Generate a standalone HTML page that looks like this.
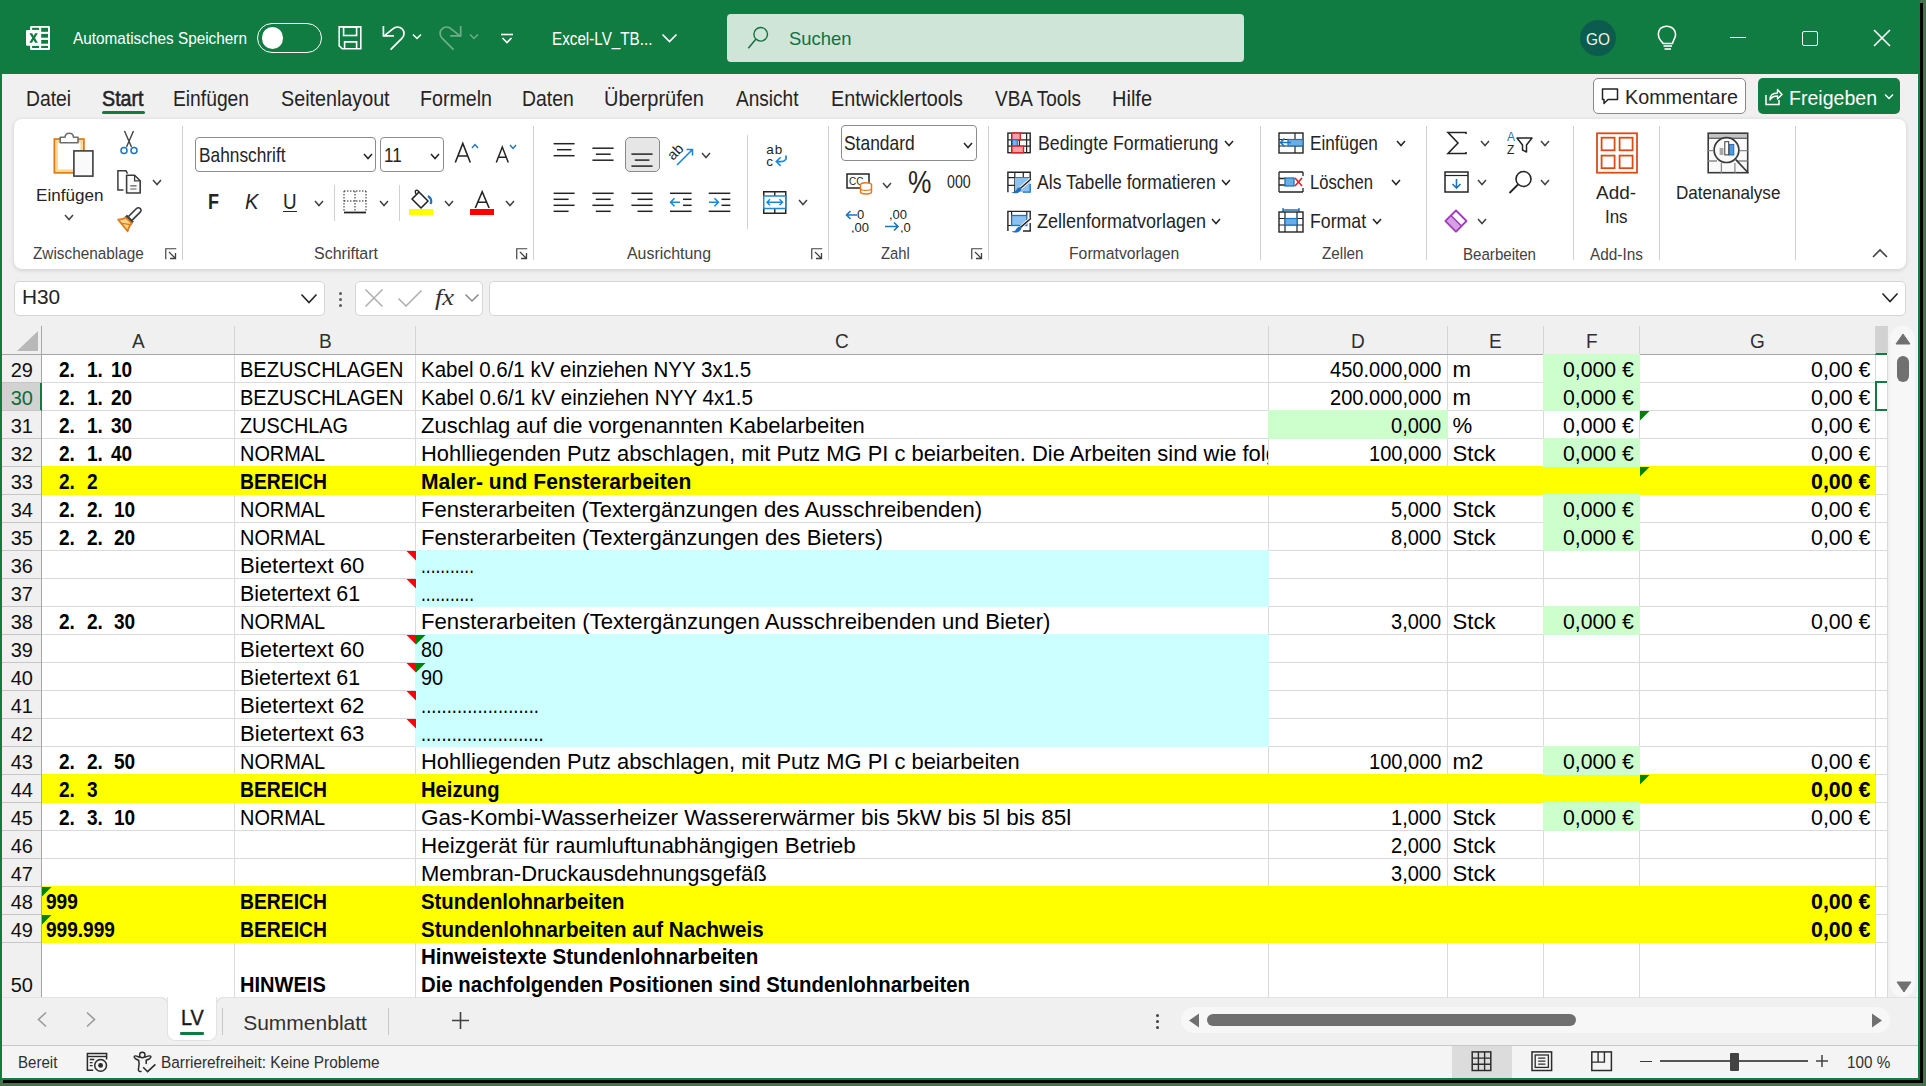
<!DOCTYPE html>
<html><head><meta charset="utf-8"><style>
html,body{margin:0;padding:0;width:1926px;height:1086px;overflow:hidden;position:relative;background:#49714f;}
.a{position:absolute;box-sizing:border-box;}
.t{position:absolute;white-space:pre;font-family:"Liberation Sans",sans-serif;transform-origin:0 0;}

</style></head><body><div class='a' style='left:3px;top:3px;width:1920px;height:1080px;background:#000;'></div><div class='a' style='left:0px;top:0px;width:1920px;height:1080px;background:#107c41;'></div><div class='a' style='left:2px;top:74px;width:1916px;height:1004px;background:#f0f0f0;'></div><div class='a' style='left:2px;top:1077px;width:1916px;height:1px;background:#ffffff;'></div><div class='a' style='left:1917px;top:74px;width:1px;height:1004px;background:#ffffff;'></div><svg class='a' style='left:0px;top:0px;' width='60' height='60' viewBox='0 0 60 60'>
<rect x="30.1" y="26" width="19.9" height="24" rx="1.2" fill="#ffffff"/>
<rect x="26" y="30.1" width="14" height="15.6" rx="1.2" fill="#ffffff"/>
<rect x="32.1" y="27.8" width="7" height="2.1" fill="#107c41"/>
<rect x="32.1" y="45.9" width="7" height="2.1" fill="#107c41"/>
<rect x="41.2" y="27.8" width="6.8" height="4" fill="#107c41"/>
<rect x="41.2" y="33.9" width="6.8" height="3.8" fill="#107c41"/>
<rect x="41.2" y="39.9" width="6.8" height="3.8" fill="#107c41"/>
<rect x="41.2" y="45.9" width="6.8" height="2.1" fill="#107c41"/>
<path d="M29.4 33.3 H32.2 L33.6 36 L35.1 33.3 H37.8 L35 37.9 L37.9 42.7 H35.1 L33.6 39.9 L32 42.7 H29.3 L32.2 37.9 Z" fill="#107c41"/>
</svg><div class='t' style='left:73.00px;top:31.00px;font-size:16.67px;line-height:16.67px;color:#ffffff;font-weight:400;transform:scaleX(0.9212);'>Automatisches Speichern</div><div class='a' style='left:257px;top:23px;width:65px;height:30px;border:1.5px solid #ffffff;border-radius:15px'></div><div class='a' style='left:261.5px;top:27px;width:21.5px;height:21.5px;background:#ffffff;border-radius:50%'></div><svg class='a' style='left:0px;top:0px;' width='560' height='60' viewBox='0 0 560 60'>
<path d="M339.2 26.9 H360.8 V48.8 H342.2 L339.2 45.8 Z" fill="none" stroke="#ffffff" stroke-width="1.6"/>
<rect x="343.6" y="26.9" width="13" height="8.6" fill="none" stroke="#ffffff" stroke-width="1.6"/>
<path d="M344.6 48.8 V41.9 H356.6 V48.8" fill="none" stroke="#ffffff" stroke-width="1.6"/>
<path d="M383.4 26.1 V35.9 H393.9" fill="none" stroke="#ffffff" stroke-width="1.7"/>
<path d="M384.2 35.9 L392.9 28.9 A6.5 6.5 0 1 1 402.1 38.1 L390.6 49.6" fill="none" stroke="#ffffff" stroke-width="1.7"/>
<path d="M460.7 26.1 V35.9 H450.2" fill="none" stroke="#6fae89" stroke-width="1.7"/>
<path d="M459.9 35.9 L451.2 28.9 A6.5 6.5 0 1 0 442 38.1 L453.5 49.6" fill="none" stroke="#6fae89" stroke-width="1.7"/>
</svg><svg class='a' style='left:412px;top:33px;' width='10' height='8' viewBox='0 0 10 8'><path d='M1 1.5 L5 5.5 L9 1.5' fill='none' stroke='#ffffff' stroke-width='1.5'/></svg><svg class='a' style='left:469px;top:33px;' width='10' height='8' viewBox='0 0 10 8'><path d='M1 1.5 L5 5.5 L9 1.5' fill='none' stroke='#6fae89' stroke-width='1.5'/></svg><svg class='a' style='left:500px;top:33px;' width='14' height='12' viewBox='0 0 14 12'><line x1='1' y1='1.5' x2='13' y2='1.5' stroke='#ffffff' stroke-width='1.6'/><path d='M2.5 5 L7 9.5 L11.5 5' fill='none' stroke='#ffffff' stroke-width='1.6'/></svg><div class='t' style='left:552.00px;top:30.00px;font-size:18.12px;line-height:18.12px;color:#ffffff;font-weight:400;transform:scaleX(0.8414);'>Excel-LV_TB...</div><svg class='a' style='left:661px;top:33px;' width='17' height='11' viewBox='0 0 17 11'><path d='M1.5 1.5 L8.5 8.5 L15.5 1.5' fill='none' stroke='#ffffff' stroke-width='1.7'/></svg><div class='a' style='left:727px;top:14px;width:517px;height:48px;background:#cfe5d8;border-radius:4px'></div><svg class='a' style='left:747px;top:26px;' width='24' height='24' viewBox='0 0 24 24'><circle cx='13.7' cy='8.3' r='6.8' fill='none' stroke='#127040' stroke-width='1.4'/><line x1='8.8' y1='13.2' x2='1.3' y2='22.3' stroke='#127040' stroke-width='1.5'/></svg><div class='t' style='left:789.00px;top:30.00px;font-size:18.84px;line-height:18.84px;color:#127040;font-weight:400;transform:scaleX(0.9787);'>Suchen</div><div class='a' style='left:1580px;top:20px;width:36px;height:36px;background:#0b5c4f;border-radius:50%'></div><div class='t' style='left:1586.00px;top:32.00px;font-size:15.94px;line-height:15.94px;color:#f4f0e0;font-weight:400;transform:scaleX(0.9679);'>GO</div><svg class='a' style='left:1656px;top:25px;' width='22' height='26' viewBox='0 0 22 26'>
<path d="M5 16 C1 12 1.5 4 7 2 C12 0 19 2.5 19.5 9 C20 13 17 15 16.5 18.5 H7 C6.8 17.5 6 17 5 16 Z" fill="none" stroke="#ffffff" stroke-width="1.6"/>
<line x1="7.5" y1="21" x2="16" y2="21" stroke="#ffffff" stroke-width="1.6"/>
<line x1="8.5" y1="24" x2="15" y2="24" stroke="#ffffff" stroke-width="1.6"/>
</svg><div class='a' style='left:1730px;top:36.5px;width:16px;height:1.5px;background:#ffffff;'></div><div class='a' style='left:1802px;top:30.5px;width:16px;height:15px;border:1.5px solid #ffffff;border-radius:2px'></div><svg class='a' style='left:1873px;top:29px;' width='18' height='18' viewBox='0 0 18 18'><path d='M1 1 L17 17 M17 1 L1 17' stroke='#ffffff' stroke-width='1.6'/></svg><div class='t' style='left:26.40px;top:88.00px;font-size:21.74px;line-height:21.74px;color:#242424;font-weight:400;transform:scaleX(0.8887);'>Datei</div><div class='t' style='left:102.40px;top:88.00px;font-size:21.74px;line-height:21.74px;color:#242424;font-weight:400;transform:scaleX(0.9062);-webkit-text-stroke:0.55px #242424;'>Start</div><div class='t' style='left:173.00px;top:88.00px;font-size:21.74px;line-height:21.74px;color:#242424;font-weight:400;transform:scaleX(0.8857);'>Einfügen</div><div class='t' style='left:281.00px;top:88.00px;font-size:21.74px;line-height:21.74px;color:#242424;font-weight:400;transform:scaleX(0.9078);'>Seitenlayout</div><div class='t' style='left:420.00px;top:88.00px;font-size:21.74px;line-height:21.74px;color:#242424;font-weight:400;transform:scaleX(0.9032);'>Formeln</div><div class='t' style='left:522.00px;top:88.00px;font-size:21.74px;line-height:21.74px;color:#242424;font-weight:400;transform:scaleX(0.8914);'>Daten</div><div class='t' style='left:604.00px;top:88.00px;font-size:21.74px;line-height:21.74px;color:#242424;font-weight:400;transform:scaleX(0.9195);'>Überprüfen</div><div class='t' style='left:735.50px;top:88.00px;font-size:21.74px;line-height:21.74px;color:#242424;font-weight:400;transform:scaleX(0.8768);'>Ansicht</div><div class='t' style='left:831.00px;top:88.00px;font-size:21.74px;line-height:21.74px;color:#242424;font-weight:400;transform:scaleX(0.9106);'>Entwicklertools</div><div class='t' style='left:995.00px;top:88.00px;font-size:21.74px;line-height:21.74px;color:#242424;font-weight:400;transform:scaleX(0.8714);'>VBA Tools</div><div class='t' style='left:1112.00px;top:88.00px;font-size:21.74px;line-height:21.74px;color:#242424;font-weight:400;transform:scaleX(0.9199);'>Hilfe</div><div class='a' style='left:102px;top:111px;width:43px;height:3px;background:#107c41;border-radius:1.5px;'></div><div class='a' style='left:1593px;top:78px;width:153px;height:36px;background:#fff;border:1px solid #8a8a8a;border-radius:5px'></div><svg class='a' style='left:1601px;top:88px;' width='18' height='17' viewBox='0 0 18 17'><path d='M1.5 1 H16.5 V11.5 H7 L3 15.5 V11.5 H1.5 Z' fill='none' stroke='#242424' stroke-width='1.5' stroke-linejoin='round'/></svg><div class='t' style='left:1625.00px;top:87.00px;font-size:20.29px;line-height:20.29px;color:#242424;font-weight:400;transform:scaleX(0.9732);'>Kommentare</div><div class='a' style='left:1758px;top:78px;width:142px;height:36px;background:#107c41;border-radius:5px'></div><svg class='a' style='left:1765px;top:87px;' width='18' height='19' viewBox='0 0 18 19'><path d='M1 8 V17.5 H14 V13' fill='none' stroke='#fff' stroke-width='1.5'/><path d='M5 13 C5 8 8 6 12.5 6 V2.5 L17 7.5 L12.5 12 V9 C9 9 6.5 10 5 13 Z' fill='none' stroke='#fff' stroke-width='1.4' stroke-linejoin='round'/></svg><div class='t' style='left:1789.00px;top:88.00px;font-size:20.29px;line-height:20.29px;color:#fff;font-weight:400;transform:scaleX(0.9636);'>Freigeben</div><svg class='a' style='left:1884px;top:93px;' width='10' height='7' viewBox='0 0 10 7'><path d='M1 1.5 L5 5.5 L9 1.5' fill='none' stroke='#fff' stroke-width='1.5'/></svg><div class='a' style='left:14px;top:119px;width:1892px;height:150px;background:#fff;border-radius:8px;box-shadow:0 1px 4px rgba(0,0,0,0.16)'></div><div class='a' style='left:182px;top:126px;width:1px;height:134px;background:#d0d0d0;'></div><div class='a' style='left:533px;top:126px;width:1px;height:134px;background:#d0d0d0;'></div><div class='a' style='left:828px;top:126px;width:1px;height:134px;background:#d0d0d0;'></div><div class='a' style='left:988px;top:126px;width:1px;height:134px;background:#d0d0d0;'></div><div class='a' style='left:1260px;top:126px;width:1px;height:134px;background:#d0d0d0;'></div><div class='a' style='left:1426px;top:126px;width:1px;height:134px;background:#d0d0d0;'></div><div class='a' style='left:1573px;top:126px;width:1px;height:134px;background:#d0d0d0;'></div><div class='a' style='left:1659px;top:126px;width:1px;height:134px;background:#d0d0d0;'></div><div class='a' style='left:1795px;top:126px;width:1px;height:134px;background:#d0d0d0;'></div><div class='t' style='left:33.00px;top:246.00px;font-size:16.67px;line-height:16.67px;color:#424242;font-weight:400;transform:scaleX(0.9205);'>Zwischenablage</div><div class='t' style='left:314.00px;top:246.00px;font-size:16.67px;line-height:16.67px;color:#424242;font-weight:400;transform:scaleX(0.9602);'>Schriftart</div><div class='t' style='left:627.00px;top:246.00px;font-size:16.67px;line-height:16.67px;color:#424242;font-weight:400;transform:scaleX(0.9549);'>Ausrichtung</div><div class='t' style='left:881.40px;top:246.00px;font-size:16.67px;line-height:16.67px;color:#424242;font-weight:400;transform:scaleX(0.8887);'>Zahl</div><div class='t' style='left:1069.30px;top:246.00px;font-size:16.67px;line-height:16.67px;color:#424242;font-weight:400;transform:scaleX(0.9455);'>Formatvorlagen</div><div class='t' style='left:1321.90px;top:246.00px;font-size:16.67px;line-height:16.67px;color:#424242;font-weight:400;transform:scaleX(0.9146);'>Zellen</div><div class='t' style='left:1463.40px;top:247.00px;font-size:16.67px;line-height:16.67px;color:#424242;font-weight:400;transform:scaleX(0.9060);'>Bearbeiten</div><div class='t' style='left:1589.50px;top:247.00px;font-size:16.67px;line-height:16.67px;color:#424242;font-weight:400;transform:scaleX(0.9232);'>Add-Ins</div><svg class='a' style='left:165px;top:248px;' width='12' height='12' viewBox='0 0 12 12'><path d='M0.75 11.25 V0.75 H11.25' fill='none' stroke='#424242' stroke-width='1.2'/><path d='M4 4 L10.5 10.5 M5 10.5 H10.5 V5' fill='none' stroke='#424242' stroke-width='1.3'/></svg><svg class='a' style='left:516px;top:248px;' width='12' height='12' viewBox='0 0 12 12'><path d='M0.75 11.25 V0.75 H11.25' fill='none' stroke='#424242' stroke-width='1.2'/><path d='M4 4 L10.5 10.5 M5 10.5 H10.5 V5' fill='none' stroke='#424242' stroke-width='1.3'/></svg><svg class='a' style='left:811px;top:248px;' width='12' height='12' viewBox='0 0 12 12'><path d='M0.75 11.25 V0.75 H11.25' fill='none' stroke='#424242' stroke-width='1.2'/><path d='M4 4 L10.5 10.5 M5 10.5 H10.5 V5' fill='none' stroke='#424242' stroke-width='1.3'/></svg><svg class='a' style='left:971px;top:248px;' width='12' height='12' viewBox='0 0 12 12'><path d='M0.75 11.25 V0.75 H11.25' fill='none' stroke='#424242' stroke-width='1.2'/><path d='M4 4 L10.5 10.5 M5 10.5 H10.5 V5' fill='none' stroke='#424242' stroke-width='1.3'/></svg><svg class='a' style='left:1872px;top:248px;' width='16' height='10' viewBox='0 0 16 10'><path d='M1 9 L8 2 L15 9' fill='none' stroke='#424242' stroke-width='1.6'/></svg><svg class='a' style='left:0px;top:0px;' width='200' height='240' viewBox='0 0 200 240'>
<rect x="54.5" y="139.2" width="29.3" height="33.5" fill="#fff" stroke="#e07b1a" stroke-width="2"/>
<rect x="56.8" y="141.5" width="24.7" height="29" fill="none" stroke="#fcd58c" stroke-width="2"/>
<path d="M60.2 142.7 V137.3 H65 C65.3 131.8 73.2 131.8 73.5 137.3 H78 V142.7 Z" fill="#fff" stroke="#6e6e6e" stroke-width="1.6" stroke-linejoin="round"/>
<rect x="73.9" y="150.9" width="19" height="25.2" fill="#fafafa" stroke="#3c3c3c" stroke-width="1.6"/>
</svg><div class='t' style='left:35.60px;top:187.00px;font-size:17.39px;line-height:17.39px;color:#242424;font-weight:400;transform:scaleX(0.9826);'>Einfügen</div><svg class='a' style='left:64px;top:214px;' width='10' height='7' viewBox='0 0 10 7'><path d='M1 1 L5.0 5.5 L9 1' fill='none' stroke='#424242' stroke-width='1.5'/></svg><svg class='a' style='left:119px;top:130px;' width='20' height='26' viewBox='0 0 20 26'>
<path d="M5.5 1 L12.5 17 M14.5 1 L7.5 17" stroke="#424242" stroke-width="1.4"/>
<circle cx="5" cy="20.5" r="3" fill="none" stroke="#1e73be" stroke-width="1.5"/>
<circle cx="15" cy="20.5" r="3" fill="none" stroke="#1e73be" stroke-width="1.5"/>
</svg><svg class='a' style='left:0px;top:0px;' width='200' height='240' viewBox='0 0 200 240'>
<path d="M127.5 173.6 L126 170.8 H117.9 V190 H123.5" fill="none" stroke="#3c3c3c" stroke-width="1.5"/>
<path d="M126.6 175.2 H134.6 L140.2 180.8 V193 H126.6 Z" fill="#fafafa" stroke="#3c3c3c" stroke-width="1.6" stroke-linejoin="round"/>
<path d="M134.6 175.2 V180.8 H140.2" fill="none" stroke="#3c3c3c" stroke-width="1.3"/>
<path d="M130.3 185.8 H136.5 M130.3 189 H136.5" stroke="#5a5a5a" stroke-width="1.2"/>
</svg><svg class='a' style='left:152px;top:179px;' width='10' height='7' viewBox='0 0 10 7'><path d='M1 1 L5.0 5.5 L9 1' fill='none' stroke='#424242' stroke-width='1.5'/></svg><svg class='a' style='left:0px;top:0px;' width='200' height='240' viewBox='0 0 200 240'>
<path d="M128.5 216.5 L136.5 208.5 C137.5 207.5 139.2 207.5 140.2 208.5 C141.2 209.5 141.2 211.2 140.2 212.2 L132.2 220.2" fill="#fff" stroke="#3c3c3c" stroke-width="1.7" stroke-linejoin="round"/>
<path d="M127 215.5 L133 221.5 L131.5 223 L125.5 217 Z" fill="#3c3c3c" stroke="#3c3c3c" stroke-width="1.2"/>
<path d="M125.8 217.6 C122.5 220 120.5 219.2 118.2 219.6 L127.6 231.2 C128.5 228.5 128.5 226 131.8 223.3 Z" fill="#fcd58c" stroke="#e07b1a" stroke-width="1.8" stroke-linejoin="round"/>
<path d="M121 223.5 C124 223 126.5 224.5 130 224.5" fill="none" stroke="#e07b1a" stroke-width="1.4"/>
</svg><div class='a' style='left:195px;top:137px;width:181px;height:35px;border:1px solid #8c8c8c;border-radius:4px;background:#fff'></div><div class='t' style='left:198.50px;top:145.00px;font-size:20.29px;line-height:20.29px;color:#242424;font-weight:400;transform:scaleX(0.8525);'>Bahnschrift</div><svg class='a' style='left:363px;top:153px;' width='10' height='7' viewBox='0 0 10 7'><path d='M1 1 L5.0 5.5 L9 1' fill='none' stroke='#242424' stroke-width='1.5'/></svg><div class='a' style='left:380px;top:137px;width:64px;height:35px;border:1px solid #8c8c8c;border-radius:4px;background:#fff'></div><div class='t' style='left:384.00px;top:145.00px;font-size:20.29px;line-height:20.29px;color:#242424;font-weight:400;transform:scaleX(0.8404);'>11</div><svg class='a' style='left:430px;top:153px;' width='10' height='7' viewBox='0 0 10 7'><path d='M1 1 L5.0 5.5 L9 1' fill='none' stroke='#242424' stroke-width='1.5'/></svg><svg class='a' style='left:0px;top:0px;' width='560' height='240' viewBox='0 0 560 240'>
<path d='M455.3 162.5 L462.8 143.5 L470.3 162.5 M457.9 156 H467.7' fill='none' stroke='#242424' stroke-width='1.6'/>
<path d='M496.3 162.5 L502.3 147 L508.3 162.5 M498.4 157.2 H506.2' fill='none' stroke='#242424' stroke-width='1.5'/>
<path d='M475.3 208 L482.2 191.8 L489.1 208 M477.6 202.3 H486.8' fill='none' stroke='#242424' stroke-width='1.6'/>
</svg><svg class='a' style='left:471px;top:143px;' width='8' height='6' viewBox='0 0 8 6'><path d='M1 5 L4 1.5 L7 5' fill='none' stroke='#1e73be' stroke-width='1.4'/></svg><svg class='a' style='left:509px;top:144px;' width='8' height='6' viewBox='0 0 8 6'><path d='M1 1 L4 4.5 L7 1' fill='none' stroke='#1e73be' stroke-width='1.4'/></svg><div class='t' style='left:207.50px;top:192.00px;font-size:21.45px;line-height:21.45px;color:#242424;font-weight:700;transform:scaleX(0.8391);'>F</div><div class='t' style='left:244.70px;top:192.00px;font-size:21.45px;line-height:21.45px;color:#242424;font-weight:400;transform:scaleX(0.9432);font-style:italic;'>K</div><div class='t' style='left:283.00px;top:192.00px;font-size:21.45px;line-height:21.45px;color:#242424;font-weight:400;transform:scaleX(0.8783);'>U</div><div class='a' style='left:283px;top:210.5px;width:14px;height:1.5px;background:#242424;'></div><svg class='a' style='left:314px;top:200px;' width='10' height='7' viewBox='0 0 10 7'><path d='M1 1 L5.0 5.5 L9 1' fill='none' stroke='#424242' stroke-width='1.5'/></svg><div class='a' style='left:334px;top:185px;width:1px;height:36px;background:#d0d0d0;'></div><svg class='a' style='left:343px;top:190px;' width='24' height='24' viewBox='0 0 24 24'>
<path d='M1 1 H23 M1 1 V21 M23 1 V21 M12 1 V21 M1 11 H23' fill='none' stroke='#242424' stroke-width='1' stroke-dasharray='1.5 1.5'/>
<line x1='1' y1='22.5' x2='23' y2='22.5' stroke='#242424' stroke-width='1.8'/>
</svg><svg class='a' style='left:379px;top:200px;' width='10' height='7' viewBox='0 0 10 7'><path d='M1 1 L5.0 5.5 L9 1' fill='none' stroke='#424242' stroke-width='1.5'/></svg><div class='a' style='left:399px;top:185px;width:1px;height:36px;background:#d0d0d0;'></div><svg class='a' style='left:409px;top:189px;' width='26' height='21' viewBox='0 0 26 21'>
<path d='M10 3 L19 12 L12 19 L3 10 Z' fill='none' stroke='#242424' stroke-width='1.6' stroke-linejoin='round'/>
<path d='M10 3 C8 0 5 1 7 5' fill='none' stroke='#242424' stroke-width='1.4'/>
<path d='M19 7 C22 9 23 12 21.5 15' fill='none' stroke='#1e73be' stroke-width='2.2'/>
</svg><div class='a' style='left:409px;top:209px;width:24px;height:6px;background:#ffff00;'></div><svg class='a' style='left:444px;top:200px;' width='10' height='7' viewBox='0 0 10 7'><path d='M1 1 L5.0 5.5 L9 1' fill='none' stroke='#424242' stroke-width='1.5'/></svg><div class='a' style='left:470px;top:209px;width:24px;height:6px;background:#ff0000;'></div><svg class='a' style='left:505px;top:200px;' width='10' height='7' viewBox='0 0 10 7'><path d='M1 1 L5.0 5.5 L9 1' fill='none' stroke='#424242' stroke-width='1.5'/></svg><div class='a' style='left:624.5px;top:137.3px;width:35px;height:35.2px;background:#e6e6e6;border:1px solid #8a8a8a;border-radius:5px'></div><svg class='a' style='left:0px;top:0px;' width='1926' height='300' viewBox='0 0 1926 300'><line x1='553.6' y1='143.7' x2='574.6' y2='143.7' stroke='#242424' stroke-width='1.5'/><line x1='557' y1='149.7' x2='571.5' y2='149.7' stroke='#242424' stroke-width='1.5'/><line x1='553.6' y1='155.7' x2='574.6' y2='155.7' stroke='#242424' stroke-width='1.5'/><line x1='592.4' y1='148.2' x2='613.6' y2='148.2' stroke='#242424' stroke-width='1.5'/><line x1='595.8' y1='154.2' x2='610.7' y2='154.2' stroke='#242424' stroke-width='1.5'/><line x1='592.4' y1='160.2' x2='613.6' y2='160.2' stroke='#242424' stroke-width='1.5'/><line x1='631.4' y1='154.1' x2='652.6' y2='154.1' stroke='#242424' stroke-width='1.5'/><line x1='634.8' y1='160.1' x2='649.4' y2='160.1' stroke='#242424' stroke-width='1.5'/><line x1='631.4' y1='166.1' x2='652.6' y2='166.1' stroke='#242424' stroke-width='1.5'/><line x1='553.6' y1='193.3' x2='574.6' y2='193.3' stroke='#242424' stroke-width='1.5'/><line x1='592.4' y1='193.3' x2='613.6' y2='193.3' stroke='#242424' stroke-width='1.5'/><line x1='631.4' y1='193.3' x2='652.6' y2='193.3' stroke='#242424' stroke-width='1.5'/><line x1='670' y1='193.3' x2='691.6' y2='193.3' stroke='#242424' stroke-width='1.5'/><line x1='708.7' y1='193.3' x2='730.3' y2='193.3' stroke='#242424' stroke-width='1.5'/><line x1='553.6' y1='199.3' x2='568.6' y2='199.3' stroke='#242424' stroke-width='1.5'/><line x1='595.8' y1='199.3' x2='610.7' y2='199.3' stroke='#242424' stroke-width='1.5'/><line x1='637.5' y1='199.3' x2='652.6' y2='199.3' stroke='#242424' stroke-width='1.5'/><line x1='683' y1='199.3' x2='691.6' y2='199.3' stroke='#242424' stroke-width='1.5'/><line x1='721.5' y1='199.3' x2='730.3' y2='199.3' stroke='#242424' stroke-width='1.5'/><line x1='553.6' y1='205.3' x2='574.6' y2='205.3' stroke='#242424' stroke-width='1.5'/><line x1='592.4' y1='205.3' x2='613.6' y2='205.3' stroke='#242424' stroke-width='1.5'/><line x1='631.4' y1='205.3' x2='652.6' y2='205.3' stroke='#242424' stroke-width='1.5'/><line x1='683' y1='205.3' x2='691.6' y2='205.3' stroke='#242424' stroke-width='1.5'/><line x1='721.5' y1='205.3' x2='730.3' y2='205.3' stroke='#242424' stroke-width='1.5'/><line x1='553.6' y1='211.3' x2='568.6' y2='211.3' stroke='#242424' stroke-width='1.5'/><line x1='595.8' y1='211.3' x2='610.7' y2='211.3' stroke='#242424' stroke-width='1.5'/><line x1='637.5' y1='211.3' x2='652.6' y2='211.3' stroke='#242424' stroke-width='1.5'/><line x1='670' y1='211.3' x2='691.6' y2='211.3' stroke='#242424' stroke-width='1.5'/><line x1='708.7' y1='211.3' x2='730.3' y2='211.3' stroke='#242424' stroke-width='1.5'/><path d='M674.5 198.3 L670.6 202.3 L674.5 206.3 M670.6 202.3 H680' fill='none' stroke='#1e88d6' stroke-width='1.6'/><path d='M714.5 198.3 L718.4 202.3 L714.5 206.3 M709 202.3 H718.4' fill='none' stroke='#1e88d6' stroke-width='1.6'/></svg><svg class='a' style='left:668px;top:141px;' width='28' height='27' viewBox='0 0 28 27'>
<text x='0' y='0' font-family='Liberation Sans' font-size='14.5' fill='#242424' transform='translate(5 20) rotate(-45)'>ab</text>
<path d='M9 24 L24.5 8.5 M18.5 8.5 H24.5 V14.5' fill='none' stroke='#1e88d6' stroke-width='1.6'/>
</svg><svg class='a' style='left:701px;top:152px;' width='10' height='7' viewBox='0 0 10 7'><path d='M1 1 L5.0 5.5 L9 1' fill='none' stroke='#424242' stroke-width='1.5'/></svg><div class='a' style='left:747px;top:135px;width:1px;height:94px;background:#d0d0d0;'></div><svg class='a' style='left:764px;top:141px;' width='26' height='28' viewBox='0 0 26 28'>
<text x='2.3' y='13.3' font-family='Liberation Sans' font-size='13.5' fill='#242424' letter-spacing='1'>ab</text>
<text x='2.3' y='24.5' font-family='Liberation Sans' font-size='13.5' fill='#242424'>c</text>
<path d='M21.5 14.5 C23.5 17.5 21 20.6 17 20.6 H12.3 M16.6 16.3 L12.3 20.6 L16.6 24.9' fill='none' stroke='#1e88d6' stroke-width='1.6'/>
</svg><svg class='a' style='left:763px;top:191px;' width='24' height='23' viewBox='0 0 24 23'>
<rect x='0.75' y='0.75' width='22' height='21.5' fill='none' stroke='#242424' stroke-width='1.5'/>
<line x1='11.75' y1='0.75' x2='11.75' y2='22' stroke='#242424' stroke-width='1.4'/>
<rect x='0.75' y='5' width='22' height='12.5' fill='#fff' stroke='#1e88d6' stroke-width='1.5'/>
<path d='M4 11.25 H19.5 M7 8.25 L4 11.25 L7 14.25 M16.5 8.25 L19.5 11.25 L16.5 14.25' fill='none' stroke='#1e88d6' stroke-width='1.5'/>
</svg><svg class='a' style='left:798px;top:199px;' width='10' height='7' viewBox='0 0 10 7'><path d='M1 1 L5.0 5.5 L9 1' fill='none' stroke='#424242' stroke-width='1.5'/></svg><div class='a' style='left:841px;top:125px;width:136px;height:36px;border:1px solid #8c8c8c;border-radius:4px;background:#fff'></div><div class='t' style='left:844.30px;top:133.00px;font-size:20.29px;line-height:20.29px;color:#242424;font-weight:400;transform:scaleX(0.8588);'>Standard</div><svg class='a' style='left:963px;top:142px;' width='10' height='7' viewBox='0 0 10 7'><path d='M1 1 L5.0 5.5 L9 1' fill='none' stroke='#242424' stroke-width='1.5'/></svg><svg class='a' style='left:846px;top:173px;' width='27' height='22' viewBox='0 0 27 22'>
<rect x='1' y='1' width='22' height='14' fill='none' stroke='#242424' stroke-width='1.5'/>
<text x='3' y='12' font-family='Liberation Sans' font-size='10' fill='#242424'>CC</text>
<ellipse cx='20' cy='12' rx='5.5' ry='2.3' fill='#fff' stroke='#e8791f' stroke-width='1.5'/>
<path d='M14.5 12 V19 C14.5 21.5 25.5 21.5 25.5 19 V12' fill='#fff' stroke='#e8791f' stroke-width='1.5'/>
<path d='M14.5 15.5 C14.5 18 25.5 18 25.5 15.5' fill='none' stroke='#e8791f' stroke-width='1.3'/>
</svg><svg class='a' style='left:882px;top:182px;' width='10' height='7' viewBox='0 0 10 7'><path d='M1 1 L5.0 5.5 L9 1' fill='none' stroke='#424242' stroke-width='1.5'/></svg><div class='t' style='left:908.00px;top:167.00px;font-size:31.16px;line-height:31.16px;color:#242424;font-weight:400;transform:scaleX(0.8447);'>%</div><div class='t' style='left:946.80px;top:174.00px;font-size:17.68px;line-height:17.68px;color:#242424;font-weight:400;transform:scaleX(0.8034);'>000</div><svg class='a' style='left:845px;top:208px;' width='27' height='25' viewBox='0 0 27 25'>
<text x='12' y='11' font-family='Liberation Sans' font-size='13' fill='#242424'>0</text>
<text x='6' y='23.5' font-family='Liberation Sans' font-size='13' fill='#242424'>,00</text>
<path d='M12 7 H1.5 M5.5 3 L1.5 7 L5.5 11' fill='none' stroke='#1e73be' stroke-width='1.6'/>
</svg><svg class='a' style='left:884px;top:208px;' width='27' height='25' viewBox='0 0 27 25'>
<text x='5' y='11' font-family='Liberation Sans' font-size='13' fill='#242424'>,00</text>
<text x='16' y='23.5' font-family='Liberation Sans' font-size='13' fill='#242424'>,0</text>
<path d='M1 18.5 H14 M10 14.5 L14 18.5 L10 22.5' fill='none' stroke='#1e73be' stroke-width='1.6'/>
</svg><svg class='a' style='left:1000px;top:125px;' width='40' height='115' viewBox='1000 125 40 115'>
<rect x="1007.9" y="133.1" width="22.3" height="19.6" fill="#fafafa" stroke="#242424" stroke-width="1.4"/>
<path d="M1007.9 139.8 H1030.2 M1007.9 146.1 H1030.2 M1011.6 133.1 V152.7 M1019.4 133.1 V152.7 M1026.6 133.1 V152.7" stroke="#242424" stroke-width="1.2"/>
<rect x="1011.9" y="133.1" width="8.4" height="6.7" fill="#f4a0a8" stroke="#e02020" stroke-width="1.3"/>
<rect x="1012.3" y="139.8" width="5" height="6.3" fill="#78b4ec" stroke="#1e6fc0" stroke-width="1.1"/>
<rect x="1011.9" y="146.1" width="11.6" height="6.6" fill="#f4a0a8" stroke="#e02020" stroke-width="1.3"/>
<path d="M1007.9 192.2 V172.3 H1030.2 V180" fill="none" stroke="#242424" stroke-width="1.4"/>
<path d="M1007.9 177.6 H1030.2 M1007.9 185.3 H1015 M1014.8 172.3 V192 M1023.3 172.3 V177.6" stroke="#242424" stroke-width="1.2"/>
<path d="M1014.8 177.6 H1030.2 V192.2 H1022 L1015 190 Z" fill="#8ec2ee"/>
<path d="M1030.2 184 V192.2 H1023" fill="none" stroke="#1e6fc0" stroke-width="1.3"/>
<path d="M1030.5 179.5 L1019.6 189" stroke="#fafafa" stroke-width="3.2"/>
<path d="M1030.5 179.5 L1020.5 188.2" stroke="#242424" stroke-width="1.5" stroke-linecap="round"/>
<path d="M1020.6 187.3 C1017.5 187 1016.8 189.5 1015.5 191 C1014.5 192 1012.8 192.3 1011.5 192 C1013.5 194 1019.5 194 1021.4 189.5 Z" fill="#1e6fc0"/>
<path d="M1007.9 231 V211.4 H1030.2 V219" fill="none" stroke="#242424" stroke-width="1.4"/>
<path d="M1011.6 211.4 V215.5 M1026.8 211.4 V215.5 M1007.9 225.5 H1011.6" stroke="#242424" stroke-width="1.2"/>
<rect x="1011.6" y="215.5" width="15.2" height="10" fill="#8ec2ee" stroke="#1e6fc0" stroke-width="1.3"/>
<path d="M1030.2 223 V231 H1023" fill="none" stroke="#242424" stroke-width="1.4"/>
<path d="M1030.5 218.7 L1019.6 228.2" stroke="#fafafa" stroke-width="3.2"/>
<path d="M1030.5 218.7 L1020.5 227.4" stroke="#242424" stroke-width="1.5" stroke-linecap="round"/>
<path d="M1020.6 226.5 C1017.5 226.2 1016.8 228.7 1015.5 230.2 C1014.5 231.2 1012.8 231.5 1011.5 231.2 C1013.5 233.2 1019.5 233.2 1021.4 228.7 Z" fill="#1e6fc0"/>
</svg><div class='t' style='left:1037.60px;top:134.00px;font-size:19.42px;line-height:19.42px;color:#242424;font-weight:400;transform:scaleX(0.9138);'>Bedingte Formatierung</div><svg class='a' style='left:1224px;top:140px;' width='10' height='7' viewBox='0 0 10 7'><path d='M1 1 L5.0 5.5 L9 1' fill='none' stroke='#242424' stroke-width='1.5'/></svg><div class='t' style='left:1037.00px;top:173.00px;font-size:19.42px;line-height:19.42px;color:#242424;font-weight:400;transform:scaleX(0.9069);'>Als Tabelle formatieren</div><svg class='a' style='left:1221px;top:179px;' width='10' height='7' viewBox='0 0 10 7'><path d='M1 1 L5.0 5.5 L9 1' fill='none' stroke='#242424' stroke-width='1.5'/></svg><div class='t' style='left:1037.00px;top:212.00px;font-size:19.42px;line-height:19.42px;color:#242424;font-weight:400;transform:scaleX(0.9271);'>Zellenformatvorlagen</div><svg class='a' style='left:1211px;top:218px;' width='10' height='7' viewBox='0 0 10 7'><path d='M1 1 L5.0 5.5 L9 1' fill='none' stroke='#242424' stroke-width='1.5'/></svg><svg class='a' style='left:1278px;top:132px;' width='26' height='22' viewBox='0 0 26 22'>
<rect x='1' y='1' width='24' height='20' fill='none' stroke='#242424' stroke-width='1.4'/>
<path d='M1 7.5 H25 M1 14 H25 M17 1 V21' stroke='#242424' stroke-width='1.2'/>
<rect x='10' y='7.5' width='15' height='6.5' fill='#6aaee6' stroke='#1e73be' stroke-width='1.2'/>
<path d='M13 10.5 H2.5 M6.5 6.5 L2.5 10.5 L6.5 14.5' fill='none' stroke='#1e73be' stroke-width='1.7'/>
</svg><div class='t' style='left:1309.70px;top:134.00px;font-size:19.42px;line-height:19.42px;color:#242424;font-weight:400;transform:scaleX(0.8848);'>Einfügen</div><svg class='a' style='left:1396px;top:140px;' width='10' height='7' viewBox='0 0 10 7'><path d='M1 1 L5.0 5.5 L9 1' fill='none' stroke='#242424' stroke-width='1.5'/></svg><svg class='a' style='left:1278px;top:171px;' width='26' height='22' viewBox='0 0 26 22'>
<path d='M1 1 H25 M1 21 H25 M1 1 V21 M25 1 V5 M25 17 V21 M1 7.5 H8 M1 14 H8' fill='none' stroke='#242424' stroke-width='1.3'/>
<rect x='7' y='7' width='9' height='8' fill='#6aaee6' stroke='#1e73be' stroke-width='1.3'/>
<path d='M17 7 L24 15 M24 7 L17 15' stroke='#e02020' stroke-width='1.6'/>
</svg><div class='t' style='left:1309.70px;top:173.00px;font-size:19.42px;line-height:19.42px;color:#242424;font-weight:400;transform:scaleX(0.8572);'>Löschen</div><svg class='a' style='left:1391px;top:179px;' width='10' height='7' viewBox='0 0 10 7'><path d='M1 1 L5.0 5.5 L9 1' fill='none' stroke='#242424' stroke-width='1.5'/></svg><svg class='a' style='left:1278px;top:208px;' width='26' height='25' viewBox='0 0 26 25'>
<path d='M5 2 H21 M5 0 V4 M21 0 V4' stroke='#1e73be' stroke-width='1.4'/>
<rect x='1' y='4' width='24' height='20' fill='none' stroke='#242424' stroke-width='1.4'/>
<path d='M1 10.5 H25 M1 17 H25 M7 4 V24 M19 4 V24' stroke='#242424' stroke-width='1.2'/>
<rect x='7' y='10.5' width='12' height='6.5' fill='#6aaee6' stroke='#1e73be' stroke-width='1.2'/>
</svg><div class='t' style='left:1309.70px;top:212.00px;font-size:19.42px;line-height:19.42px;color:#242424;font-weight:400;transform:scaleX(0.9127);'>Format</div><svg class='a' style='left:1372px;top:218px;' width='10' height='7' viewBox='0 0 10 7'><path d='M1 1 L5.0 5.5 L9 1' fill='none' stroke='#242424' stroke-width='1.5'/></svg><svg class='a' style='left:1446px;top:131px;' width='22' height='24' viewBox='0 0 22 24'><path d='M20 3 V1.5 H2 L12 12 L2 22.5 H20 V21' fill='none' stroke='#242424' stroke-width='1.6'/></svg><svg class='a' style='left:1480px;top:140px;' width='10' height='7' viewBox='0 0 10 7'><path d='M1 1 L5.0 5.5 L9 1' fill='none' stroke='#424242' stroke-width='1.5'/></svg><svg class='a' style='left:1507px;top:130px;' width='28' height='26' viewBox='0 0 28 26'>
<text x='0' y='11' font-family='Liberation Sans' font-size='12' fill='#1e73be'>A</text>
<text x='0' y='24' font-family='Liberation Sans' font-size='12' fill='#242424'>Z</text>
<path d='M10 8 H25 L19.5 15 V22 L15.5 20 V15 Z' fill='none' stroke='#242424' stroke-width='1.5' stroke-linejoin='round'/>
</svg><svg class='a' style='left:1540px;top:140px;' width='10' height='7' viewBox='0 0 10 7'><path d='M1 1 L5.0 5.5 L9 1' fill='none' stroke='#424242' stroke-width='1.5'/></svg><svg class='a' style='left:1444px;top:171px;' width='26' height='22' viewBox='0 0 26 22'>
<rect x='1' y='1' width='23' height='20' fill='none' stroke='#242424' stroke-width='1.5'/>
<line x1='1' y1='4.5' x2='24' y2='4.5' stroke='#242424' stroke-width='1.2'/>
<path d='M12.5 8 V17 M8.5 13 L12.5 17 L16.5 13' fill='none' stroke='#1e73be' stroke-width='1.6'/>
</svg><svg class='a' style='left:1477px;top:179px;' width='10' height='7' viewBox='0 0 10 7'><path d='M1 1 L5.0 5.5 L9 1' fill='none' stroke='#424242' stroke-width='1.5'/></svg><svg class='a' style='left:1508px;top:170px;' width='25' height='24' viewBox='0 0 25 24'><circle cx='15.5' cy='9' r='7.5' fill='none' stroke='#242424' stroke-width='1.6'/><line x1='10' y1='14.5' x2='1.5' y2='23' stroke='#242424' stroke-width='1.8'/></svg><svg class='a' style='left:1540px;top:179px;' width='10' height='7' viewBox='0 0 10 7'><path d='M1 1 L5.0 5.5 L9 1' fill='none' stroke='#424242' stroke-width='1.5'/></svg><svg class='a' style='left:1444px;top:209px;' width='24' height='24' viewBox='0 0 24 24'>
<path d='M12 1.5 L22.5 12 L12 22.5 L1.5 12 Z' fill='none' stroke='#a23bbb' stroke-width='1.8' stroke-linejoin='round'/>
<path d='M1.5 12 L7 6.5 L17.5 17 L12 22.5 Z' fill='#d7a0e4' stroke='#a23bbb' stroke-width='1.6' stroke-linejoin='round'/>
</svg><svg class='a' style='left:1477px;top:218px;' width='10' height='7' viewBox='0 0 10 7'><path d='M1 1 L5.0 5.5 L9 1' fill='none' stroke='#424242' stroke-width='1.5'/></svg><svg class='a' style='left:1580px;top:120px;' width='200' height='60' viewBox='1580 120 200 60'>
<rect x="1597" y="133.3" width="40" height="39.4" fill="none" stroke="#dc4a1a" stroke-width="1.8"/>
<rect x="1601.6" y="137.7" width="13" height="12.6" fill="none" stroke="#dc4a1a" stroke-width="1.8"/>
<rect x="1619.6" y="137.7" width="13" height="12.6" fill="none" stroke="#dc4a1a" stroke-width="1.8"/>
<rect x="1601.6" y="155.6" width="13" height="12.6" fill="none" stroke="#dc4a1a" stroke-width="1.8"/>
<rect x="1619.6" y="155.6" width="13" height="12.6" fill="none" stroke="#dc4a1a" stroke-width="1.8"/>
<rect x="1708.2" y="133.2" width="39.5" height="39.5" fill="#fafafa" stroke="#3a3a3a" stroke-width="1.6"/>
<rect x="1709" y="134" width="38" height="4" fill="#c4c4c4"/>
<path d="M1708.2 138.2 H1747.7" stroke="#3a3a3a" stroke-width="1.1"/>
<path d="M1708.2 150.6 H1713 M1740 150.6 H1747.7 M1708.2 161 H1717 M1737 161 H1747.7 M1721.4 163 V172.7 M1734.9 163 V172.7" stroke="#8a8a8a" stroke-width="1.3"/>
<circle cx="1726.5" cy="150.1" r="12.4" fill="#fafafa" stroke="#3a3a3a" stroke-width="1.7"/>
<path d="M1735.8 159.6 L1748.3 173" stroke="#3a3a3a" stroke-width="1.7"/>
<rect x="1719.6" y="147.9" width="3.8" height="7.1" fill="#a8a8a8"/>
<rect x="1724.8" y="141.7" width="3.9" height="13.2" fill="#fff" stroke="#3a3a3a" stroke-width="1"/>
<rect x="1729.4" y="144.4" width="4.4" height="10.6" fill="#4a9be0" stroke="#1565c0" stroke-width="0.9"/>
</svg><div class='t' style='left:1596.00px;top:184.00px;font-size:18.26px;line-height:18.26px;color:#242424;font-weight:400;transform:scaleX(1.0373);'>Add-</div><div class='t' style='left:1605.00px;top:208.00px;font-size:18.26px;line-height:18.26px;color:#242424;font-weight:400;transform:scaleX(0.9278);'>Ins</div><div class='t' style='left:1675.60px;top:184.00px;font-size:18.26px;line-height:18.26px;color:#242424;font-weight:400;transform:scaleX(0.9354);'>Datenanalyse</div><div class='a' style='left:14px;top:281px;width:311px;height:35px;background:#fff;border:1px solid #d6d6d6;border-radius:5px'></div><div class='t' style='left:21.80px;top:287.00px;font-size:20.72px;line-height:20.72px;color:#242424;font-weight:400;transform:scaleX(1.0048);'>H30</div><svg class='a' style='left:300px;top:293px;' width='18' height='12' viewBox='0 0 18 12'><path d='M1.5 1.5 L9 9.5 L16.5 1.5' fill='none' stroke='#242424' stroke-width='1.6'/></svg><div class='a' style='left:338.5px;top:292px;width:3px;height:3px;background:#5a5a5a;border-radius:50%;'></div><div class='a' style='left:338.5px;top:298px;width:3px;height:3px;background:#5a5a5a;border-radius:50%;'></div><div class='a' style='left:338.5px;top:304px;width:3px;height:3px;background:#5a5a5a;border-radius:50%;'></div><div class='a' style='left:355px;top:281px;width:127.5px;height:35px;background:#fff;border:1px solid #d6d6d6;border-radius:5px'></div><svg class='a' style='left:364px;top:288px;' width='20' height='20' viewBox='0 0 20 20'><path d='M1.5 1.5 L18.5 18.5 M18.5 1.5 L1.5 18.5' stroke='#b0b0b0' stroke-width='1.6'/></svg><svg class='a' style='left:397px;top:289px;' width='26' height='18' viewBox='0 0 26 18'><path d='M1.5 9.5 L9 17 L24.5 1.5' fill='none' stroke='#b0b0b0' stroke-width='1.6'/></svg><div class='t' style='left:435.00px;top:286.00px;font-size:23.19px;line-height:23.19px;color:#303030;font-weight:400;transform:scaleX(1.1382);font-style:italic;font-family:"Liberation Serif";'>fx</div><svg class='a' style='left:464px;top:293px;' width='16' height='10' viewBox='0 0 16 10'><path d='M1.5 1.5 L8 8 L14.5 1.5' fill='none' stroke='#8a8a8a' stroke-width='1.5'/></svg><div class='a' style='left:489px;top:281px;width:1416.5px;height:35px;background:#fff;border:1px solid #d6d6d6;border-radius:5px'></div><svg class='a' style='left:1881px;top:292px;' width='18' height='12' viewBox='0 0 18 12'><path d='M1.5 1.5 L9 9.5 L16.5 1.5' fill='none' stroke='#242424' stroke-width='1.6'/></svg><div class='a' style='left:42px;top:355px;width:1845px;height:642px;background:#ffffff;'></div><div class='a' style='left:2px;top:326px;width:1885px;height:28px;background:#f0f0f0;'></div><div class='a' style='left:2px;top:354px;width:1885px;height:1px;background:#a6a6a6;'></div><div class='a' style='left:2px;top:355px;width:39px;height:642px;background:#f0f0f0;'></div><div class='a' style='left:41px;top:326px;width:1px;height:671px;background:#a6a6a6;'></div><div class='a' style='left:2px;top:383px;width:39px;height:27px;background:#d2d2d2;'></div><div class='a' style='left:40px;top:383px;width:2px;height:28px;background:#107c41;'></div><div class='a' style='left:1876px;top:326px;width:11px;height:28px;background:#d2d2d2;'></div><div class='a' style='left:1875px;top:353px;width:12px;height:2px;background:#107c41;'></div><svg class='a' style='left:17px;top:331px;' width='21' height='20' viewBox='0 0 21 20'><path d='M21 0 V20 H0 Z' fill='#b8b8b8'/></svg><div class='a' style='left:42px;top:382px;width:1845px;height:1px;background:#dadada;'></div><div class='a' style='left:2px;top:382px;width:39px;height:1px;background:#c6c6c6;'></div><div class='a' style='left:42px;top:410px;width:1845px;height:1px;background:#dadada;'></div><div class='a' style='left:2px;top:410px;width:39px;height:1px;background:#c6c6c6;'></div><div class='a' style='left:42px;top:438px;width:1845px;height:1px;background:#dadada;'></div><div class='a' style='left:2px;top:438px;width:39px;height:1px;background:#c6c6c6;'></div><div class='a' style='left:42px;top:466px;width:1845px;height:1px;background:#dadada;'></div><div class='a' style='left:2px;top:466px;width:39px;height:1px;background:#c6c6c6;'></div><div class='a' style='left:42px;top:494px;width:1845px;height:1px;background:#dadada;'></div><div class='a' style='left:2px;top:494px;width:39px;height:1px;background:#c6c6c6;'></div><div class='a' style='left:42px;top:522px;width:1845px;height:1px;background:#dadada;'></div><div class='a' style='left:2px;top:522px;width:39px;height:1px;background:#c6c6c6;'></div><div class='a' style='left:42px;top:550px;width:1845px;height:1px;background:#dadada;'></div><div class='a' style='left:2px;top:550px;width:39px;height:1px;background:#c6c6c6;'></div><div class='a' style='left:42px;top:578px;width:1845px;height:1px;background:#dadada;'></div><div class='a' style='left:2px;top:578px;width:39px;height:1px;background:#c6c6c6;'></div><div class='a' style='left:42px;top:606px;width:1845px;height:1px;background:#dadada;'></div><div class='a' style='left:2px;top:606px;width:39px;height:1px;background:#c6c6c6;'></div><div class='a' style='left:42px;top:634px;width:1845px;height:1px;background:#dadada;'></div><div class='a' style='left:2px;top:634px;width:39px;height:1px;background:#c6c6c6;'></div><div class='a' style='left:42px;top:662px;width:1845px;height:1px;background:#dadada;'></div><div class='a' style='left:2px;top:662px;width:39px;height:1px;background:#c6c6c6;'></div><div class='a' style='left:42px;top:690px;width:1845px;height:1px;background:#dadada;'></div><div class='a' style='left:2px;top:690px;width:39px;height:1px;background:#c6c6c6;'></div><div class='a' style='left:42px;top:718px;width:1845px;height:1px;background:#dadada;'></div><div class='a' style='left:2px;top:718px;width:39px;height:1px;background:#c6c6c6;'></div><div class='a' style='left:42px;top:746px;width:1845px;height:1px;background:#dadada;'></div><div class='a' style='left:2px;top:746px;width:39px;height:1px;background:#c6c6c6;'></div><div class='a' style='left:42px;top:774px;width:1845px;height:1px;background:#dadada;'></div><div class='a' style='left:2px;top:774px;width:39px;height:1px;background:#c6c6c6;'></div><div class='a' style='left:42px;top:802px;width:1845px;height:1px;background:#dadada;'></div><div class='a' style='left:2px;top:802px;width:39px;height:1px;background:#c6c6c6;'></div><div class='a' style='left:42px;top:830px;width:1845px;height:1px;background:#dadada;'></div><div class='a' style='left:2px;top:830px;width:39px;height:1px;background:#c6c6c6;'></div><div class='a' style='left:42px;top:858px;width:1845px;height:1px;background:#dadada;'></div><div class='a' style='left:2px;top:858px;width:39px;height:1px;background:#c6c6c6;'></div><div class='a' style='left:42px;top:886px;width:1845px;height:1px;background:#dadada;'></div><div class='a' style='left:2px;top:886px;width:39px;height:1px;background:#c6c6c6;'></div><div class='a' style='left:42px;top:914px;width:1845px;height:1px;background:#dadada;'></div><div class='a' style='left:2px;top:914px;width:39px;height:1px;background:#c6c6c6;'></div><div class='a' style='left:42px;top:942px;width:1845px;height:1px;background:#dadada;'></div><div class='a' style='left:2px;top:942px;width:39px;height:1px;background:#c6c6c6;'></div><div class='a' style='left:234px;top:355px;width:1px;height:642px;background:#dadada;'></div><div class='a' style='left:415px;top:355px;width:1px;height:642px;background:#dadada;'></div><div class='a' style='left:1268px;top:355px;width:1px;height:642px;background:#dadada;'></div><div class='a' style='left:1447px;top:355px;width:1px;height:642px;background:#dadada;'></div><div class='a' style='left:1543px;top:355px;width:1px;height:642px;background:#dadada;'></div><div class='a' style='left:1639px;top:355px;width:1px;height:642px;background:#dadada;'></div><div class='a' style='left:1875px;top:355px;width:1px;height:642px;background:#dadada;'></div><div class='a' style='left:1887px;top:355px;width:1px;height:642px;background:#dadada;'></div><div class='a' style='left:234px;top:326px;width:1px;height:28px;background:#d4d4d4;'></div><div class='a' style='left:415px;top:326px;width:1px;height:28px;background:#d4d4d4;'></div><div class='a' style='left:1268px;top:326px;width:1px;height:28px;background:#d4d4d4;'></div><div class='a' style='left:1447px;top:326px;width:1px;height:28px;background:#d4d4d4;'></div><div class='a' style='left:1543px;top:326px;width:1px;height:28px;background:#d4d4d4;'></div><div class='a' style='left:1639px;top:326px;width:1px;height:28px;background:#d4d4d4;'></div><div class='a' style='left:1875px;top:326px;width:1px;height:28px;background:#d4d4d4;'></div><div class='a' style='left:1887px;top:326px;width:1px;height:28px;background:#d4d4d4;'></div><div class='t' style='left:131.64px;top:331.00px;font-size:20.72px;line-height:20.72px;color:#303030;font-weight:400;transform:scaleX(0.9200);'>A</div><div class='t' style='left:318.64px;top:331.00px;font-size:20.72px;line-height:20.72px;color:#303030;font-weight:400;transform:scaleX(0.9200);'>B</div><div class='t' style='left:835.11px;top:331.00px;font-size:20.72px;line-height:20.72px;color:#303030;font-weight:400;transform:scaleX(0.9200);'>C</div><div class='t' style='left:1351.11px;top:331.00px;font-size:20.72px;line-height:20.72px;color:#303030;font-weight:400;transform:scaleX(0.9200);'>D</div><div class='t' style='left:1489.14px;top:331.00px;font-size:20.72px;line-height:20.72px;color:#303030;font-weight:400;transform:scaleX(0.9200);'>E</div><div class='t' style='left:1585.68px;top:331.00px;font-size:20.72px;line-height:20.72px;color:#303030;font-weight:400;transform:scaleX(0.9200);'>F</div><div class='t' style='left:1750.08px;top:331.00px;font-size:20.72px;line-height:20.72px;color:#303030;font-weight:400;transform:scaleX(0.9200);'>G</div><div class='a' style='left:42px;top:466px;width:1833px;height:29px;background:#ffff00;'></div><div class='a' style='left:42px;top:774px;width:1833px;height:29px;background:#ffff00;'></div><div class='a' style='left:42px;top:886px;width:1833px;height:29px;background:#ffff00;'></div><div class='a' style='left:42px;top:914px;width:1833px;height:29px;background:#ffff00;'></div><div class='a' style='left:42px;top:886px;width:1833px;height:57px;background:#ffff00;'></div><div class='a' style='left:1543px;top:354px;width:97px;height:29px;background:#ccffcc;'></div><div class='a' style='left:1543px;top:382px;width:97px;height:29px;background:#ccffcc;'></div><div class='a' style='left:1543px;top:438px;width:97px;height:29px;background:#ccffcc;'></div><div class='a' style='left:1543px;top:494px;width:97px;height:29px;background:#ccffcc;'></div><div class='a' style='left:1543px;top:522px;width:97px;height:29px;background:#ccffcc;'></div><div class='a' style='left:1543px;top:606px;width:97px;height:29px;background:#ccffcc;'></div><div class='a' style='left:1543px;top:746px;width:97px;height:29px;background:#ccffcc;'></div><div class='a' style='left:1543px;top:802px;width:97px;height:29px;background:#ccffcc;'></div><div class='a' style='left:1268px;top:410px;width:180px;height:29px;background:#ccffcc;'></div><div class='a' style='left:415px;top:550px;width:854px;height:57px;background:#ccffff;'></div><div class='a' style='left:415px;top:634px;width:854px;height:113px;background:#ccffff;'></div><div class='a' style='left:1875px;top:381px;width:12px;height:2px;background:#107c41;'></div><div class='a' style='left:1875px;top:409px;width:12px;height:2px;background:#107c41;'></div><div class='a' style='left:1875px;top:381px;width:2px;height:30px;background:#107c41;'></div><div class='t' style='left:10.68px;top:360.00px;font-size:20.00px;line-height:20.00px;color:#101010;font-weight:400;'>29</div><div class='t' style='left:10.68px;top:388.00px;font-size:20.00px;line-height:20.00px;color:#0f6b3a;font-weight:400;'>30</div><div class='t' style='left:10.68px;top:416.00px;font-size:20.00px;line-height:20.00px;color:#101010;font-weight:400;'>31</div><div class='t' style='left:10.68px;top:444.00px;font-size:20.00px;line-height:20.00px;color:#101010;font-weight:400;'>32</div><div class='t' style='left:10.68px;top:472.00px;font-size:20.00px;line-height:20.00px;color:#101010;font-weight:400;'>33</div><div class='t' style='left:10.68px;top:500.00px;font-size:20.00px;line-height:20.00px;color:#101010;font-weight:400;'>34</div><div class='t' style='left:10.68px;top:528.00px;font-size:20.00px;line-height:20.00px;color:#101010;font-weight:400;'>35</div><div class='t' style='left:10.68px;top:556.00px;font-size:20.00px;line-height:20.00px;color:#101010;font-weight:400;'>36</div><div class='t' style='left:10.68px;top:584.00px;font-size:20.00px;line-height:20.00px;color:#101010;font-weight:400;'>37</div><div class='t' style='left:10.68px;top:612.00px;font-size:20.00px;line-height:20.00px;color:#101010;font-weight:400;'>38</div><div class='t' style='left:10.68px;top:640.00px;font-size:20.00px;line-height:20.00px;color:#101010;font-weight:400;'>39</div><div class='t' style='left:10.68px;top:668.00px;font-size:20.00px;line-height:20.00px;color:#101010;font-weight:400;'>40</div><div class='t' style='left:10.68px;top:696.00px;font-size:20.00px;line-height:20.00px;color:#101010;font-weight:400;'>41</div><div class='t' style='left:10.68px;top:724.00px;font-size:20.00px;line-height:20.00px;color:#101010;font-weight:400;'>42</div><div class='t' style='left:10.68px;top:752.00px;font-size:20.00px;line-height:20.00px;color:#101010;font-weight:400;'>43</div><div class='t' style='left:10.68px;top:780.00px;font-size:20.00px;line-height:20.00px;color:#101010;font-weight:400;'>44</div><div class='t' style='left:10.68px;top:808.00px;font-size:20.00px;line-height:20.00px;color:#101010;font-weight:400;'>45</div><div class='t' style='left:10.68px;top:836.00px;font-size:20.00px;line-height:20.00px;color:#101010;font-weight:400;'>46</div><div class='t' style='left:10.68px;top:864.00px;font-size:20.00px;line-height:20.00px;color:#101010;font-weight:400;'>47</div><div class='t' style='left:10.68px;top:892.00px;font-size:20.00px;line-height:20.00px;color:#101010;font-weight:400;'>48</div><div class='t' style='left:10.68px;top:920.00px;font-size:20.00px;line-height:20.00px;color:#101010;font-weight:400;'>49</div><div class='t' style='left:10.68px;top:975.00px;font-size:20.00px;line-height:20.00px;color:#101010;font-weight:400;'>50</div><div class='t' style='left:58.60px;top:359.00px;font-size:22.17px;line-height:22.17px;color:#000;font-weight:700;transform:scaleX(0.8600);'>2.</div><div class='t' style='left:86.50px;top:359.00px;font-size:22.17px;line-height:22.17px;color:#000;font-weight:700;transform:scaleX(0.8600);'>1.</div><div class='t' style='left:110.50px;top:359.00px;font-size:22.17px;line-height:22.17px;color:#000;font-weight:700;transform:scaleX(0.8600);'>10</div><div class='t' style='left:240.00px;top:359.00px;font-size:22.17px;line-height:22.17px;color:#000;font-weight:400;transform:scaleX(0.9028);'>BEZUSCHLAGEN</div><div class='t' style='left:421.00px;top:359.00px;font-size:22.17px;line-height:22.17px;color:#000;font-weight:400;transform:scaleX(0.9255);'>Kabel 0.6/1 kV einziehen NYY 3x1.5</div><div class='t' style='left:1330.09px;top:359.00px;font-size:22.17px;line-height:22.17px;color:#000;font-weight:400;transform:scaleX(0.9050);'>450.000,000</div><div class='t' style='left:1452.60px;top:359.00px;font-size:22.17px;line-height:22.17px;color:#000;font-weight:400;'>m</div><div class='t' style='left:1562.70px;top:359.00px;font-size:22.17px;line-height:22.17px;color:#000;font-weight:400;transform:scaleX(0.9589);'>0,000 €</div><div class='t' style='left:1810.80px;top:359.00px;font-size:22.17px;line-height:22.17px;color:#000;font-weight:400;transform:scaleX(0.9658);'>0,00 €</div><div class='t' style='left:58.60px;top:387.00px;font-size:22.17px;line-height:22.17px;color:#000;font-weight:700;transform:scaleX(0.8600);'>2.</div><div class='t' style='left:86.50px;top:387.00px;font-size:22.17px;line-height:22.17px;color:#000;font-weight:700;transform:scaleX(0.8600);'>1.</div><div class='t' style='left:110.50px;top:387.00px;font-size:22.17px;line-height:22.17px;color:#000;font-weight:700;transform:scaleX(0.8600);'>20</div><div class='t' style='left:240.00px;top:387.00px;font-size:22.17px;line-height:22.17px;color:#000;font-weight:400;transform:scaleX(0.9028);'>BEZUSCHLAGEN</div><div class='t' style='left:421.00px;top:387.00px;font-size:22.17px;line-height:22.17px;color:#000;font-weight:400;transform:scaleX(0.9305);'>Kabel 0.6/1 kV einziehen NYY 4x1.5</div><div class='t' style='left:1330.09px;top:387.00px;font-size:22.17px;line-height:22.17px;color:#000;font-weight:400;transform:scaleX(0.9050);'>200.000,000</div><div class='t' style='left:1452.60px;top:387.00px;font-size:22.17px;line-height:22.17px;color:#000;font-weight:400;'>m</div><div class='t' style='left:1562.70px;top:387.00px;font-size:22.17px;line-height:22.17px;color:#000;font-weight:400;transform:scaleX(0.9589);'>0,000 €</div><div class='t' style='left:1810.80px;top:387.00px;font-size:22.17px;line-height:22.17px;color:#000;font-weight:400;transform:scaleX(0.9658);'>0,00 €</div><div class='t' style='left:58.60px;top:415.00px;font-size:22.17px;line-height:22.17px;color:#000;font-weight:700;transform:scaleX(0.8600);'>2.</div><div class='t' style='left:86.50px;top:415.00px;font-size:22.17px;line-height:22.17px;color:#000;font-weight:700;transform:scaleX(0.8600);'>1.</div><div class='t' style='left:110.50px;top:415.00px;font-size:22.17px;line-height:22.17px;color:#000;font-weight:700;transform:scaleX(0.8600);'>30</div><div class='t' style='left:240.00px;top:415.00px;font-size:22.17px;line-height:22.17px;color:#000;font-weight:400;transform:scaleX(0.8951);'>ZUSCHLAG</div><div class='t' style='left:421.00px;top:415.00px;font-size:22.17px;line-height:22.17px;color:#000;font-weight:400;transform:scaleX(0.9925);'>Zuschlag auf die vorgenannten Kabelarbeiten</div><div class='t' style='left:1391.41px;top:415.00px;font-size:22.17px;line-height:22.17px;color:#000;font-weight:400;transform:scaleX(0.9050);'>0,000</div><div class='t' style='left:1452.60px;top:415.00px;font-size:22.17px;line-height:22.17px;color:#000;font-weight:400;'>%</div><div class='t' style='left:1562.70px;top:415.00px;font-size:22.17px;line-height:22.17px;color:#000;font-weight:400;transform:scaleX(0.9589);'>0,000 €</div><div class='t' style='left:1810.80px;top:415.00px;font-size:22.17px;line-height:22.17px;color:#000;font-weight:400;transform:scaleX(0.9658);'>0,00 €</div><div class='t' style='left:58.60px;top:443.00px;font-size:22.17px;line-height:22.17px;color:#000;font-weight:700;transform:scaleX(0.8600);'>2.</div><div class='t' style='left:86.50px;top:443.00px;font-size:22.17px;line-height:22.17px;color:#000;font-weight:700;transform:scaleX(0.8600);'>1.</div><div class='t' style='left:110.50px;top:443.00px;font-size:22.17px;line-height:22.17px;color:#000;font-weight:700;transform:scaleX(0.8600);'>40</div><div class='t' style='left:240.00px;top:443.00px;font-size:22.17px;line-height:22.17px;color:#000;font-weight:400;transform:scaleX(0.8988);'>NORMAL</div><div class='t' style='left:1369.12px;top:443.00px;font-size:22.17px;line-height:22.17px;color:#000;font-weight:400;transform:scaleX(0.9050);'>100,000</div><div class='t' style='left:1452.60px;top:443.00px;font-size:22.17px;line-height:22.17px;color:#000;font-weight:400;'>Stck</div><div class='t' style='left:1562.70px;top:443.00px;font-size:22.17px;line-height:22.17px;color:#000;font-weight:400;transform:scaleX(0.9589);'>0,000 €</div><div class='t' style='left:1810.80px;top:443.00px;font-size:22.17px;line-height:22.17px;color:#000;font-weight:400;transform:scaleX(0.9658);'>0,00 €</div><div class='a' style='left:416px;top:439px;width:852px;height:27px;overflow:hidden'><div class='t' style='left:5.00px;top:4.00px;font-size:22.17px;line-height:22.17px;color:#000;font-weight:400;transform:scaleX(0.9882);'>Hohlliegenden Putz abschlagen, mit Putz MG PI c beiarbeiten. Die Arbeiten sind wie folgt:</div></div><div class='t' style='left:58.60px;top:471.00px;font-size:22.17px;line-height:22.17px;color:#000;font-weight:700;transform:scaleX(0.8600);'>2.</div><div class='t' style='left:86.50px;top:471.00px;font-size:22.17px;line-height:22.17px;color:#000;font-weight:700;transform:scaleX(0.8600);'>2</div><div class='t' style='left:240.00px;top:471.00px;font-size:22.17px;line-height:22.17px;color:#000;font-weight:700;transform:scaleX(0.8725);'>BEREICH</div><div class='t' style='left:421.00px;top:471.00px;font-size:22.17px;line-height:22.17px;color:#000;font-weight:700;transform:scaleX(0.9504);'>Maler- und Fensterarbeiten</div><div class='t' style='left:1810.80px;top:471.00px;font-size:22.17px;line-height:22.17px;color:#000;font-weight:700;transform:scaleX(0.9658);'>0,00 €</div><div class='t' style='left:58.60px;top:499.00px;font-size:22.17px;line-height:22.17px;color:#000;font-weight:700;transform:scaleX(0.8600);'>2.</div><div class='t' style='left:86.50px;top:499.00px;font-size:22.17px;line-height:22.17px;color:#000;font-weight:700;transform:scaleX(0.8600);'>2.</div><div class='t' style='left:113.50px;top:499.00px;font-size:22.17px;line-height:22.17px;color:#000;font-weight:700;transform:scaleX(0.8600);'>10</div><div class='t' style='left:240.00px;top:499.00px;font-size:22.17px;line-height:22.17px;color:#000;font-weight:400;transform:scaleX(0.8988);'>NORMAL</div><div class='t' style='left:421.00px;top:499.00px;font-size:22.17px;line-height:22.17px;color:#000;font-weight:400;transform:scaleX(0.9945);'>Fensterarbeiten (Textergänzungen des Ausschreibenden)</div><div class='t' style='left:1391.41px;top:499.00px;font-size:22.17px;line-height:22.17px;color:#000;font-weight:400;transform:scaleX(0.9050);'>5,000</div><div class='t' style='left:1452.60px;top:499.00px;font-size:22.17px;line-height:22.17px;color:#000;font-weight:400;'>Stck</div><div class='t' style='left:1562.70px;top:499.00px;font-size:22.17px;line-height:22.17px;color:#000;font-weight:400;transform:scaleX(0.9589);'>0,000 €</div><div class='t' style='left:1810.80px;top:499.00px;font-size:22.17px;line-height:22.17px;color:#000;font-weight:400;transform:scaleX(0.9658);'>0,00 €</div><div class='t' style='left:58.60px;top:527.00px;font-size:22.17px;line-height:22.17px;color:#000;font-weight:700;transform:scaleX(0.8600);'>2.</div><div class='t' style='left:86.50px;top:527.00px;font-size:22.17px;line-height:22.17px;color:#000;font-weight:700;transform:scaleX(0.8600);'>2.</div><div class='t' style='left:113.50px;top:527.00px;font-size:22.17px;line-height:22.17px;color:#000;font-weight:700;transform:scaleX(0.8600);'>20</div><div class='t' style='left:240.00px;top:527.00px;font-size:22.17px;line-height:22.17px;color:#000;font-weight:400;transform:scaleX(0.8988);'>NORMAL</div><div class='t' style='left:421.00px;top:527.00px;font-size:22.17px;line-height:22.17px;color:#000;font-weight:400;transform:scaleX(0.9975);'>Fensterarbeiten (Textergänzungen des Bieters)</div><div class='t' style='left:1391.41px;top:527.00px;font-size:22.17px;line-height:22.17px;color:#000;font-weight:400;transform:scaleX(0.9050);'>8,000</div><div class='t' style='left:1452.60px;top:527.00px;font-size:22.17px;line-height:22.17px;color:#000;font-weight:400;'>Stck</div><div class='t' style='left:1562.70px;top:527.00px;font-size:22.17px;line-height:22.17px;color:#000;font-weight:400;transform:scaleX(0.9589);'>0,000 €</div><div class='t' style='left:1810.80px;top:527.00px;font-size:22.17px;line-height:22.17px;color:#000;font-weight:400;transform:scaleX(0.9658);'>0,00 €</div><div class='t' style='left:240.00px;top:555.00px;font-size:22.17px;line-height:22.17px;color:#000;font-weight:400;'>Bietertext 60</div><div class='t' style='left:421.00px;top:555.00px;font-size:22.17px;line-height:22.17px;color:#000;font-weight:400;transform:scaleX(0.7826);'>...........</div><div class='t' style='left:240.00px;top:583.00px;font-size:22.17px;line-height:22.17px;color:#000;font-weight:400;transform:scaleX(0.9662);'>Bietertext 61</div><div class='t' style='left:421.00px;top:583.00px;font-size:22.17px;line-height:22.17px;color:#000;font-weight:400;transform:scaleX(0.7826);'>...........</div><div class='t' style='left:58.60px;top:611.00px;font-size:22.17px;line-height:22.17px;color:#000;font-weight:700;transform:scaleX(0.8600);'>2.</div><div class='t' style='left:86.50px;top:611.00px;font-size:22.17px;line-height:22.17px;color:#000;font-weight:700;transform:scaleX(0.8600);'>2.</div><div class='t' style='left:113.50px;top:611.00px;font-size:22.17px;line-height:22.17px;color:#000;font-weight:700;transform:scaleX(0.8600);'>30</div><div class='t' style='left:240.00px;top:611.00px;font-size:22.17px;line-height:22.17px;color:#000;font-weight:400;transform:scaleX(0.8988);'>NORMAL</div><div class='t' style='left:421.00px;top:611.00px;font-size:22.17px;line-height:22.17px;color:#000;font-weight:400;'>Fensterarbeiten (Textergänzungen Ausschreibenden und Bieter)</div><div class='t' style='left:1391.41px;top:611.00px;font-size:22.17px;line-height:22.17px;color:#000;font-weight:400;transform:scaleX(0.9050);'>3,000</div><div class='t' style='left:1452.60px;top:611.00px;font-size:22.17px;line-height:22.17px;color:#000;font-weight:400;'>Stck</div><div class='t' style='left:1562.70px;top:611.00px;font-size:22.17px;line-height:22.17px;color:#000;font-weight:400;transform:scaleX(0.9589);'>0,000 €</div><div class='t' style='left:1810.80px;top:611.00px;font-size:22.17px;line-height:22.17px;color:#000;font-weight:400;transform:scaleX(0.9658);'>0,00 €</div><div class='t' style='left:240.00px;top:639.00px;font-size:22.17px;line-height:22.17px;color:#000;font-weight:400;'>Bietertext 60</div><div class='t' style='left:421.00px;top:639.00px;font-size:22.17px;line-height:22.17px;color:#000;font-weight:400;transform:scaleX(0.9000);'>80</div><div class='t' style='left:240.00px;top:667.00px;font-size:22.17px;line-height:22.17px;color:#000;font-weight:400;transform:scaleX(0.9662);'>Bietertext 61</div><div class='t' style='left:421.00px;top:667.00px;font-size:22.17px;line-height:22.17px;color:#000;font-weight:400;transform:scaleX(0.9000);'>90</div><div class='t' style='left:240.00px;top:695.00px;font-size:22.17px;line-height:22.17px;color:#000;font-weight:400;'>Bietertext 62</div><div class='t' style='left:421.00px;top:695.00px;font-size:22.17px;line-height:22.17px;color:#000;font-weight:400;transform:scaleX(0.8334);'>.......................</div><div class='t' style='left:240.00px;top:723.00px;font-size:22.17px;line-height:22.17px;color:#000;font-weight:400;'>Bietertext 63</div><div class='t' style='left:421.00px;top:723.00px;font-size:22.17px;line-height:22.17px;color:#000;font-weight:400;transform:scaleX(0.8305);'>........................</div><div class='t' style='left:58.60px;top:751.00px;font-size:22.17px;line-height:22.17px;color:#000;font-weight:700;transform:scaleX(0.8600);'>2.</div><div class='t' style='left:86.50px;top:751.00px;font-size:22.17px;line-height:22.17px;color:#000;font-weight:700;transform:scaleX(0.8600);'>2.</div><div class='t' style='left:113.50px;top:751.00px;font-size:22.17px;line-height:22.17px;color:#000;font-weight:700;transform:scaleX(0.8600);'>50</div><div class='t' style='left:240.00px;top:751.00px;font-size:22.17px;line-height:22.17px;color:#000;font-weight:400;transform:scaleX(0.8988);'>NORMAL</div><div class='t' style='left:421.00px;top:751.00px;font-size:22.17px;line-height:22.17px;color:#000;font-weight:400;transform:scaleX(0.9882);'>Hohlliegenden Putz abschlagen, mit Putz MG PI c beiarbeiten</div><div class='t' style='left:1369.12px;top:751.00px;font-size:22.17px;line-height:22.17px;color:#000;font-weight:400;transform:scaleX(0.9050);'>100,000</div><div class='t' style='left:1452.60px;top:751.00px;font-size:22.17px;line-height:22.17px;color:#000;font-weight:400;'>m2</div><div class='t' style='left:1562.70px;top:751.00px;font-size:22.17px;line-height:22.17px;color:#000;font-weight:400;transform:scaleX(0.9589);'>0,000 €</div><div class='t' style='left:1810.80px;top:751.00px;font-size:22.17px;line-height:22.17px;color:#000;font-weight:400;transform:scaleX(0.9658);'>0,00 €</div><div class='t' style='left:58.60px;top:779.00px;font-size:22.17px;line-height:22.17px;color:#000;font-weight:700;transform:scaleX(0.8600);'>2.</div><div class='t' style='left:86.50px;top:779.00px;font-size:22.17px;line-height:22.17px;color:#000;font-weight:700;transform:scaleX(0.8600);'>3</div><div class='t' style='left:240.00px;top:779.00px;font-size:22.17px;line-height:22.17px;color:#000;font-weight:700;transform:scaleX(0.8725);'>BEREICH</div><div class='t' style='left:421.00px;top:779.00px;font-size:22.17px;line-height:22.17px;color:#000;font-weight:700;transform:scaleX(0.9110);'>Heizung</div><div class='t' style='left:1810.80px;top:779.00px;font-size:22.17px;line-height:22.17px;color:#000;font-weight:700;transform:scaleX(0.9658);'>0,00 €</div><div class='t' style='left:58.60px;top:807.00px;font-size:22.17px;line-height:22.17px;color:#000;font-weight:700;transform:scaleX(0.8600);'>2.</div><div class='t' style='left:86.50px;top:807.00px;font-size:22.17px;line-height:22.17px;color:#000;font-weight:700;transform:scaleX(0.8600);'>3.</div><div class='t' style='left:113.50px;top:807.00px;font-size:22.17px;line-height:22.17px;color:#000;font-weight:700;transform:scaleX(0.8600);'>10</div><div class='t' style='left:240.00px;top:807.00px;font-size:22.17px;line-height:22.17px;color:#000;font-weight:400;transform:scaleX(0.8988);'>NORMAL</div><div class='t' style='left:421.00px;top:807.00px;font-size:22.17px;line-height:22.17px;color:#000;font-weight:400;transform:scaleX(1.0165);'>Gas-Kombi-Wasserheizer Wassererwärmer bis 5kW bis 5l bis 85l</div><div class='t' style='left:1391.41px;top:807.00px;font-size:22.17px;line-height:22.17px;color:#000;font-weight:400;transform:scaleX(0.9050);'>1,000</div><div class='t' style='left:1452.60px;top:807.00px;font-size:22.17px;line-height:22.17px;color:#000;font-weight:400;'>Stck</div><div class='t' style='left:1562.70px;top:807.00px;font-size:22.17px;line-height:22.17px;color:#000;font-weight:400;transform:scaleX(0.9589);'>0,000 €</div><div class='t' style='left:1810.80px;top:807.00px;font-size:22.17px;line-height:22.17px;color:#000;font-weight:400;transform:scaleX(0.9658);'>0,00 €</div><div class='t' style='left:421.00px;top:835.00px;font-size:22.17px;line-height:22.17px;color:#000;font-weight:400;transform:scaleX(1.0115);'>Heizgerät für raumluftunabhängigen Betrieb</div><div class='t' style='left:1391.41px;top:835.00px;font-size:22.17px;line-height:22.17px;color:#000;font-weight:400;transform:scaleX(0.9050);'>2,000</div><div class='t' style='left:1452.60px;top:835.00px;font-size:22.17px;line-height:22.17px;color:#000;font-weight:400;'>Stck</div><div class='t' style='left:421.00px;top:863.00px;font-size:22.17px;line-height:22.17px;color:#000;font-weight:400;transform:scaleX(0.9919);'>Membran-Druckausdehnungsgefäß</div><div class='t' style='left:1391.41px;top:863.00px;font-size:22.17px;line-height:22.17px;color:#000;font-weight:400;transform:scaleX(0.9050);'>3,000</div><div class='t' style='left:1452.60px;top:863.00px;font-size:22.17px;line-height:22.17px;color:#000;font-weight:400;'>Stck</div><div class='t' style='left:46.00px;top:891.00px;font-size:22.17px;line-height:22.17px;color:#000;font-weight:700;transform:scaleX(0.8600);'>999</div><div class='t' style='left:240.00px;top:891.00px;font-size:22.17px;line-height:22.17px;color:#000;font-weight:700;transform:scaleX(0.8725);'>BEREICH</div><div class='t' style='left:421.00px;top:891.00px;font-size:22.17px;line-height:22.17px;color:#000;font-weight:700;transform:scaleX(0.9180);'>Stundenlohnarbeiten</div><div class='t' style='left:1810.80px;top:891.00px;font-size:22.17px;line-height:22.17px;color:#000;font-weight:700;transform:scaleX(0.9658);'>0,00 €</div><div class='t' style='left:46.00px;top:919.00px;font-size:22.17px;line-height:22.17px;color:#000;font-weight:700;transform:scaleX(0.8600);'>999.999</div><div class='t' style='left:240.00px;top:919.00px;font-size:22.17px;line-height:22.17px;color:#000;font-weight:700;transform:scaleX(0.8725);'>BEREICH</div><div class='t' style='left:421.00px;top:919.00px;font-size:22.17px;line-height:22.17px;color:#000;font-weight:700;transform:scaleX(0.9279);'>Stundenlohnarbeiten auf Nachweis</div><div class='t' style='left:1810.80px;top:919.00px;font-size:22.17px;line-height:22.17px;color:#000;font-weight:700;transform:scaleX(0.9658);'>0,00 €</div><div class='t' style='left:240.00px;top:974.00px;font-size:22.17px;line-height:22.17px;color:#000;font-weight:700;transform:scaleX(0.9052);'>HINWEIS</div><div class='t' style='left:421.00px;top:946.00px;font-size:22.17px;line-height:22.17px;color:#000;font-weight:700;transform:scaleX(0.9285);'>Hinweistexte Stundenlohnarbeiten</div><div class='t' style='left:421.00px;top:974.00px;font-size:22.17px;line-height:22.17px;color:#000;font-weight:700;transform:scaleX(0.9195);'>Die nachfolgenden Positionen sind Stundenlohnarbeiten</div><svg class='a' style='left:1640px;top:411px;' width='10' height='10' viewBox='0 0 10 10'><path d='M0 0 H9.5 L0 9.5 Z' fill='#008000'/></svg><svg class='a' style='left:1640px;top:467px;' width='10' height='10' viewBox='0 0 10 10'><path d='M0 0 H9.5 L0 9.5 Z' fill='#008000'/></svg><svg class='a' style='left:1640px;top:775px;' width='10' height='10' viewBox='0 0 10 10'><path d='M0 0 H9.5 L0 9.5 Z' fill='#008000'/></svg><svg class='a' style='left:416px;top:635px;' width='10' height='10' viewBox='0 0 10 10'><path d='M0 0 H9.5 L0 9.5 Z' fill='#008000'/></svg><svg class='a' style='left:416px;top:663px;' width='10' height='10' viewBox='0 0 10 10'><path d='M0 0 H9.5 L0 9.5 Z' fill='#008000'/></svg><svg class='a' style='left:42px;top:887px;' width='10' height='10' viewBox='0 0 10 10'><path d='M0 0 H9.5 L0 9.5 Z' fill='#008000'/></svg><svg class='a' style='left:42px;top:915px;' width='10' height='10' viewBox='0 0 10 10'><path d='M0 0 H9.5 L0 9.5 Z' fill='#008000'/></svg><svg class='a' style='left:405.5px;top:551px;' width='10' height='10' viewBox='0 0 10 10'><path d='M0.5 0 H10 V9.5 Z' fill='#ff0000'/></svg><svg class='a' style='left:405.5px;top:579px;' width='10' height='10' viewBox='0 0 10 10'><path d='M0.5 0 H10 V9.5 Z' fill='#ff0000'/></svg><svg class='a' style='left:405.5px;top:635px;' width='10' height='10' viewBox='0 0 10 10'><path d='M0.5 0 H10 V9.5 Z' fill='#ff0000'/></svg><svg class='a' style='left:405.5px;top:663px;' width='10' height='10' viewBox='0 0 10 10'><path d='M0.5 0 H10 V9.5 Z' fill='#ff0000'/></svg><svg class='a' style='left:405.5px;top:691px;' width='10' height='10' viewBox='0 0 10 10'><path d='M0.5 0 H10 V9.5 Z' fill='#ff0000'/></svg><svg class='a' style='left:405.5px;top:719px;' width='10' height='10' viewBox='0 0 10 10'><path d='M0.5 0 H10 V9.5 Z' fill='#ff0000'/></svg><div class='a' style='left:150px;top:997px;width:90px;height:8px;background:#ffffff;'></div><div class='a' style='left:2px;top:997px;width:165.5px;height:48px;background:#f0f0f0;border-top-right-radius:7px;box-shadow:inset -1px 1px 0 #e2e2e2'></div><div class='a' style='left:216px;top:997px;width:1702px;height:48px;background:#f0f0f0;border-top-left-radius:7px;box-shadow:inset 1px 1px 0 #e2e2e2'></div><div class='a' style='left:160px;top:1025px;width:64px;height:21px;background:#f0f0f0;'></div><div class='a' style='left:2px;top:1045px;width:1916px;height:1px;background:#c8c8c8;'></div><svg class='a' style='left:36px;top:1011px;' width='12' height='17' viewBox='0 0 12 17'><path d='M10 1.5 L2.5 8.5 L10 15.5' fill='none' stroke='#9a9a9a' stroke-width='1.6'/></svg><svg class='a' style='left:85px;top:1011px;' width='12' height='17' viewBox='0 0 12 17'><path d='M2 1.5 L9.5 8.5 L2 15.5' fill='none' stroke='#9a9a9a' stroke-width='1.6'/></svg><div class='a' style='left:167.5px;top:997px;width:48.5px;height:42.5px;background:#fff;border-radius:0 0 7px 7px;box-shadow:0 0 0 1px #e2e2e2;clip-path:inset(0 -2px -2px -2px)'></div><div class='t' style='left:181.00px;top:1007.00px;font-size:21.74px;line-height:21.74px;color:#1a1a1a;font-weight:400;transform:scaleX(0.9126);-webkit-text-stroke:0.4px #1a1a1a;'>LV</div><div class='a' style='left:180px;top:1032px;width:24px;height:3px;background:#107c41;border-radius:1px;'></div><div class='a' style='left:222px;top:1008px;width:1px;height:27px;background:#c8c8c8;'></div><div class='t' style='left:243.20px;top:1012.00px;font-size:21.01px;line-height:21.01px;color:#303030;font-weight:400;'>Summenblatt</div><div class='a' style='left:388px;top:1008px;width:1px;height:27px;background:#c8c8c8;'></div><svg class='a' style='left:451px;top:1011px;' width='19' height='19' viewBox='0 0 19 19'><path d='M9.5 1 V18 M1 9.5 H18' stroke='#424242' stroke-width='1.6'/></svg><div class='a' style='left:1155.5px;top:1014px;width:3px;height:3px;background:#424242;border-radius:50%;'></div><div class='a' style='left:1155.5px;top:1020px;width:3px;height:3px;background:#424242;border-radius:50%;'></div><div class='a' style='left:1155.5px;top:1026px;width:3px;height:3px;background:#424242;border-radius:50%;'></div><div class='a' style='left:1181px;top:1007px;width:709px;height:26px;background:#f7f7f7;border-radius:13px'></div><svg class='a' style='left:1188px;top:1013px;' width='12' height='15' viewBox='0 0 12 15'><path d='M11 0.5 V14.5 L1 7.5 Z' fill='#707070'/></svg><div class='a' style='left:1206.5px;top:1013.5px;width:369px;height:12.5px;background:#707070;border-radius:6px'></div><svg class='a' style='left:1871px;top:1013px;' width='12' height='15' viewBox='0 0 12 15'><path d='M1 0.5 V14.5 L11 7.5 Z' fill='#707070'/></svg><div class='a' style='left:1890px;top:326px;width:25px;height:671px;background:#f7f7f7;border-radius:12px'></div><svg class='a' style='left:1895px;top:333px;' width='16' height='12' viewBox='0 0 16 12'><path d='M8 1 L15 11 H1 Z' fill='#707070' stroke='#707070' stroke-width='1' stroke-linejoin='round'/></svg><div class='a' style='left:1897px;top:356px;width:12px;height:26px;background:#707070;border-radius:6px'></div><svg class='a' style='left:1896px;top:981px;' width='16' height='12' viewBox='0 0 16 12'><path d='M1 1 H15 L8 11 Z' fill='#707070' stroke='#707070' stroke-width='1' stroke-linejoin='round'/></svg><div class='a' style='left:2px;top:1046px;width:1916px;height:31px;background:#f4f4f4;'></div><div class='t' style='left:18.20px;top:1055.00px;font-size:15.94px;line-height:15.94px;color:#303030;font-weight:400;transform:scaleX(0.9462);'>Bereit</div><svg class='a' style='left:0px;top:1040px;' width='200' height='40' viewBox='0 1040 200 40'>
<path d="M93.2 1070.2 H87.4 V1053.6 H106.6 V1059.6" fill="none" stroke="#2a2a2a" stroke-width="1.5"/>
<line x1="87.4" y1="1056.5" x2="106.6" y2="1056.5" stroke="#2a2a2a" stroke-width="1.4"/>
<path d="M89.8 1059.5 H94.3 M89.8 1062.6 H92.6 M89.8 1065.6 H92.6" stroke="#2a2a2a" stroke-width="1.3"/>
<circle cx="100.6" cy="1065.4" r="5.9" fill="none" stroke="#2a2a2a" stroke-width="1.5"/>
<circle cx="100.6" cy="1065.4" r="2.4" fill="#2a2a2a"/>
<circle cx="142.3" cy="1055" r="2.7" fill="none" stroke="#2a2a2a" stroke-width="1.4"/>
<path d="M139.5 1057.2 C137 1056.2 135 1055 134.3 1056.4 C133.5 1058 136.5 1059.5 138.7 1060.3 C139.5 1063.5 139 1066 138.6 1068 C137.8 1070.5 139 1072 141 1071.5" fill="none" stroke="#2a2a2a" stroke-width="1.5" stroke-linecap="round"/>
<path d="M145 1057.2 C147.5 1056.2 150 1055 150.8 1056.4 C151.5 1058 148.5 1059.5 146.2 1060.3 V1063.5" fill="none" stroke="#2a2a2a" stroke-width="1.5" stroke-linecap="round"/>
<path d="M143.2 1067.2 L147.6 1071.7 L155.4 1064.3" fill="none" stroke="#2a2a2a" stroke-width="1.6"/>
</svg><div class='t' style='left:161.00px;top:1055.00px;font-size:15.94px;line-height:15.94px;color:#303030;font-weight:400;transform:scaleX(0.9635);'>Barrierefreiheit: Keine Probleme</div><div class='a' style='left:1452px;top:1046px;width:60px;height:32px;background:#dcdcdc;'></div><svg class='a' style='left:1440px;top:1040px;' width='200' height='40' viewBox='1440 1040 200 40'>
<rect x="1472.2" y="1051.9" width="18.6" height="18.6" fill="none" stroke="#2c2c2c" stroke-width="1.5"/>
<path d="M1478.4 1051.9 V1070.5 M1484.6 1051.9 V1070.5 M1472.2 1058.1 H1490.8 M1472.2 1064.3 H1490.8" stroke="#2c2c2c" stroke-width="1.4"/>
<rect x="1532" y="1051.9" width="19.6" height="18.6" fill="none" stroke="#2c2c2c" stroke-width="1.5"/>
<rect x="1535.2" y="1055" width="13.2" height="12.4" fill="none" stroke="#2c2c2c" stroke-width="1.3"/>
<path d="M1538.2 1058.2 H1545.4 M1538.2 1061.2 H1545.4 M1538.2 1064.2 H1545.4" stroke="#2c2c2c" stroke-width="1.2"/>
<rect x="1591.8" y="1051.9" width="19.6" height="18.6" fill="none" stroke="#2c2c2c" stroke-width="1.5"/>
<path d="M1591.8 1062.1 H1604.4 V1051.9 M1598.1 1051.9 V1062.1" fill="none" stroke="#2c2c2c" stroke-width="1.4"/>
</svg><div class='a' style='left:1640px;top:1060.5px;width:11.5px;height:1.5px;background:#3a3a3a;'></div><div class='a' style='left:1660px;top:1060.3px;width:148px;height:2px;background:#555555;'></div><div class='a' style='left:1730px;top:1052.5px;width:9px;height:18px;background:#424242;border-radius:1px;'></div><svg class='a' style='left:1815px;top:1054px;' width='14' height='14' viewBox='0 0 14 14'><path d='M7 1 V13 M1 7 H13' stroke='#424242' stroke-width='1.5'/></svg><div class='t' style='left:1847.00px;top:1055.00px;font-size:15.94px;line-height:15.94px;color:#303030;font-weight:400;transform:scaleX(0.9557);'>100 %</div></body></html>
